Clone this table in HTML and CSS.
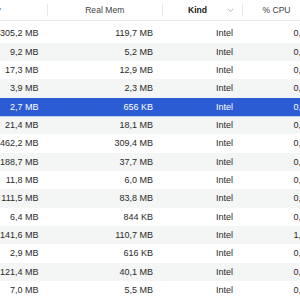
FILE: index.html
```html
<!DOCTYPE html>
<html lang="en">
<head>
  <meta charset="UTF-8" />
  <title>Activity Monitor - Memory</title>
  <link rel="stylesheet" href="styles.css">
</head>
<body>
  <div class="table">
    <div class="head">
      <div class="hcell first">Memory</div>
      <div class="hcell">Real Mem</div>
      <div class="hcell sorted">
        <span class="kind-label">Kind</span>
        <svg class="chevron" width="7" height="5" viewBox="0 0 7 5">
          <polyline points="0.8,1 3.5,3.6 6.2,1" fill="none" stroke="#a9a9a9" stroke-width="0.9" />
        </svg>
      </div>
      <div class="hcell">% CPU</div>
    </div>

    <div class="rows" id="rows"></div>
  </div>

  <script>
    const data = [
      ['305,2 MB', '119,7 MB', 'Intel', '0,3'],
      ['9,2 MB', '5,2 MB', 'Intel', '0,1'],
      ['17,3 MB', '12,9 MB', 'Intel', '0,0'],
      ['3,9 MB', '2,3 MB', 'Intel', '0,0'],
      ['2,7 MB', '656 KB', 'Intel', '0,0'],
      ['21,4 MB', '18,1 MB', 'Intel', '0,1'],
      ['462,2 MB', '309,4 MB', 'Intel', '0,2'],
      ['188,7 MB', '37,7 MB', 'Intel', '0,4'],
      ['11,8 MB', '6,0 MB', 'Intel', '0,0'],
      ['111,5 MB', '83,8 MB', 'Intel', '0,9'],
      ['6,4 MB', '844 KB', 'Intel', '0,0'],
      ['141,6 MB', '110,7 MB', 'Intel', '1,2'],
      ['2,9 MB', '616 KB', 'Intel', '0,0'],
      ['121,4 MB', '40,1 MB', 'Intel', '0,0'],
      ['7,0 MB', '5,5 MB', 'Intel', '0,0']
    ];

    let html = '';
    data.forEach((row, index) => {
      let rowClass = 'row';
      if (index % 2 === 1) rowClass += ' alt';
      if (index === 4) rowClass += ' selected';

      html += `
        <div class="${rowClass}">
          <div class="cell mem">${row[0]}</div>
          <div class="cell real">${row[1]}</div>
          <div class="cell kind">${row[2]}</div>
          <div class="cell cpu">${row[3]}</div>
        </div>
      `;
    });

    document.getElementById('rows').innerHTML = html;
  </script>
</body>
</html>
```

FILE: styles.css
```css
html, body {
  margin: 0;
  padding: 0;
  overflow: hidden;
  background: white;
}

body {
  font-family: 'Liberation Sans', Arial, sans-serif;
  color: #2a2a2a;
  width: 300px;
  height: 300px;
}

.table {
  margin-left: -76px;
  width: 386px;
}

.head,
.row {
  display: grid;
  grid-template-columns: 122.5px 115.5px 80px 68px;
}

.head {
  padding: 4px 0;
  height: 12px;
  border-bottom: 1px solid #e6e6e6;
  font-size: 8.6px;
  color: #444;
}

.hcell {
  display: flex;
  align-items: center;
  justify-content: center;
  line-height: 12px;
  border-left: 1px solid #e8e8e8;
}

.hcell.first {
  border-left: none;
}

.hcell.sorted {
  justify-content: flex-start;
  padding-left: 25px;
}

.kind-label {
  font-weight: bold;
  color: #222;
}

.chevron {
  margin-left: 20px;
}

.rows {
  padding-top: 3.33px;
}

.row {
  height: 18.33px;
  font-size: 9px;
  align-items: center;
}

.row.alt {
  background: #f4f5f5;
}

.row.selected {
  background: #2b5cd3;
  color: white;
  box-shadow: 0 1px 0 #b9caf0;
  position: relative;
}

.cell {
  white-space: nowrap;
}

.mem {
  text-align: right;
  padding-right: 8px;
}

.real {
  text-align: right;
  padding-right: 9px;
}

.kind {
  padding-left: 54px;
}

.cpu {
  text-align: right;
  padding-right: 4px;
}
```
